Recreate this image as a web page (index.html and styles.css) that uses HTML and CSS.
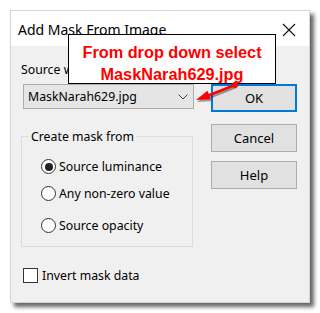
FILE: index.html
```html
<!DOCTYPE html>
<html>
<head>
<meta charset="utf-8">
<link rel="stylesheet" href="styles.css">
</head>
<body>
<div class="page">
  <div class="dialog">
    <div class="titlebar">
      <span class="title">Add Mask From Image</span>
      <svg class="close" width="14" height="14" viewBox="0 0 14 14"><path d="M1 1L13 13M13 1L1 13" stroke="#111" stroke-width="1.1" fill="none"/></svg>
    </div>
    <div class="body">
      <div class="left">
        <div class="label">Source window:</div>
        <div class="select">
          <span>MaskNarah629.jpg</span>
          <svg class="chev" width="10" height="6" viewBox="0 0 10 6"><path d="M0.5 0.5L5 5L9.5 0.5" stroke="#444" stroke-width="1" fill="none"/></svg>
        </div>
        <div class="group">
          <div class="legend">Create mask from</div>
          <div class="radio r1"><span class="circle checked"></span><span>Source luminance</span></div>
          <div class="radio r2"><span class="circle"></span><span>Any non-zero value</span></div>
          <div class="radio r3"><span class="circle"></span><span>Source opacity</span></div>
        </div>
        <div class="check"><span class="box"></span><span>Invert mask data</span></div>
      </div>
      <div class="right">
        <div class="btn ok">OK</div>
        <div class="btn cancel">Cancel</div>
        <div class="btn help">Help</div>
      </div>
    </div>
  </div>
  <div class="callout">From drop down select<br>MaskNarah629.jpg</div>
  <svg class="arrow" width="320" height="313" viewBox="0 0 320 313">
    <g fill="rgba(0,0,0,0.35)" stroke="rgba(0,0,0,0.35)">
      <line x1="236" y1="87" x2="208" y2="98" stroke-width="2.5"/>
      <polygon points="197,102 211.7,101.2 208.5,92.8" stroke="none"/>
    </g>
    <g fill="#f00" stroke="#f00">
      <line x1="235" y1="85" x2="207" y2="96" stroke-width="2.5"/>
      <polygon points="196,100 210.7,99.2 207.5,90.8" stroke="none"/>
      <circle cx="235" cy="85" r="3" stroke="none"/>
    </g>
  </svg>
</div>
</body>
</html>
```

FILE: styles.css
```css
html, body {
  margin: 0;
  padding: 0;
  background: #fff;
}

.page {
  position: relative;
  width: 320px;
  height: 313px;
  overflow: hidden;
  font-family: "Noto Sans", "Open Sans", sans-serif;
  font-size: 12.3px;
  color: #000;
}

.dialog {
  margin: 10px 0 0 10px;
  width: 300px;
  height: 293px;
  box-sizing: border-box;
  border: 1px solid #d4d4d4;
  background: #f0f0f0;
  box-shadow: 4px 4px 4px rgba(0, 0, 0, 0.6);
  display: flex;
  flex-direction: column;
}

.titlebar {
  height: 35px;
  background: #fff;
  display: flex;
  align-items: center;
  justify-content: space-between;
  padding: 0 13px 0 7px;
  flex: none;
}

.title {
  font-size: 14px;
  line-height: 20px;
  margin-top: 2px;
}

.close {
  display: block;
  margin-top: 2px;
}

.body {
  display: flex;
  justify-content: space-between;
  padding: 0 12px 0 10px;
  flex: 1;
}

.left {
  width: 172px;
  display: flex;
  flex-direction: column;
}

.label {
  margin-top: 15px;
  line-height: 17px;
  height: 17px;
  white-space: nowrap;
}

.select {
  margin-top: 6px;
  margin-left: 2px;
  width: 171px;
  height: 25px;
  box-sizing: border-box;
  border: 1px solid #adadad;
  background: #e5e5e5;
  display: flex;
  align-items: center;
  justify-content: space-between;
  padding: 0 5px 0 4px;
  line-height: 17px;
}

.chev {
  display: block;
}

.group {
  position: relative;
  margin-top: 27px;
  width: 172px;
  height: 111px;
  box-sizing: border-box;
  border: 1px solid #dcdcdc;
  padding-left: 19px;
  display: flex;
  flex-direction: column;
}

.legend {
  position: absolute;
  top: -9px;
  left: 7px;
  padding: 0 2px;
  background: #f0f0f0;
  line-height: 17px;
}

.radio {
  display: flex;
  align-items: center;
  gap: 3px;
  height: 15px;
  line-height: 17px;
  white-space: nowrap;
}

.r1 { margin-top: 22px; }
.r2 { margin-top: 12px; }
.r3 { margin-top: 17px; }

.circle {
  width: 15px;
  height: 15px;
  box-sizing: border-box;
  border: 1px solid #333;
  border-radius: 50%;
  background: #fff;
  display: flex;
  align-items: center;
  justify-content: center;
  flex: none;
}

.circle.checked::after {
  content: "";
  width: 8px;
  height: 8px;
  border-radius: 50%;
  background: #222;
}

.check {
  margin-top: 21px;
  margin-left: 2px;
  display: flex;
  align-items: center;
  gap: 4px;
  height: 15px;
  line-height: 17px;
}

.box {
  width: 15px;
  height: 15px;
  box-sizing: border-box;
  border: 1px solid #333;
  background: #fff;
  flex: none;
}

.right {
  width: 86px;
  display: flex;
  flex-direction: column;
}

.btn {
  height: 28px;
  box-sizing: border-box;
  border: 1px solid #adadad;
  background: #e1e1e1;
  display: flex;
  align-items: center;
  justify-content: center;
  line-height: 17px;
  font-size: 13px;
}

.ok {
  margin-top: 38px;
  border: 2px solid #0078d7;
}

.cancel { margin-top: 12px; }
.help { margin-top: 9px; }

.callout {
  position: absolute;
  left: 68px;
  top: 34px;
  width: 208px;
  height: 50px;
  box-sizing: border-box;
  border: 1px solid #000;
  background: #fff;
  color: #f00;
  font-family: "Liberation Sans", Arial, sans-serif;
  font-weight: bold;
  font-size: 16.3px;
  line-height: 21.5px;
  text-align: center;
  padding-top: 7px;
}

.arrow {
  position: absolute;
  left: 0;
  top: 0;
  pointer-events: none;
}
```
